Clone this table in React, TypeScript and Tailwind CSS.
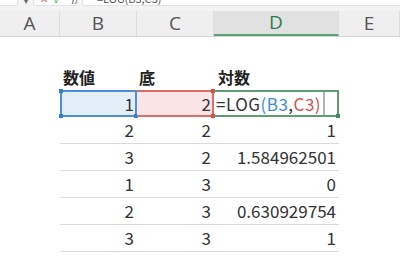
const FONT = { fontFamily: '"Noto Sans CJK JP", "Noto Sans", sans-serif' };

const COLS = [
  { key: 'A', w: 'w-[60px]' },
  { key: 'B', w: 'w-[77px]' },
  { key: 'C', w: 'w-[77px]' },
  { key: 'D', w: 'w-[125px]' },
  { key: 'E', w: 'flex-1' },
];

const ROWS = [
  { b: '2', c: '2', d: '1' },
  { b: '3', c: '2', d: '1.584962501' },
  { b: '1', c: '3', d: '0' },
  { b: '2', c: '3', d: '0.630929754' },
  { b: '3', c: '3', d: '1' },
];

function Corner({ cls }: { cls: string }) {
  return <span className={`absolute w-[4px] h-[4px] ${cls}`} />;
}

export default function App() {
  return (
    <div className="w-[400px] h-[267px] bg-white overflow-hidden text-[#333]" style={FONT}>
      {/* formula bar remnant */}
      <div className="h-[11px] bg-[#f3f3f3] flex items-start">
        <div className="w-[18px] h-[6px] bg-white rounded-br-[3px] border-b border-r border-[#e2e2e2]" />
        <div className="w-[15px] h-[6px] flex justify-center items-start overflow-hidden">
          <span className="text-[8px] leading-none text-[#666] -mt-[3px]">▾</span>
        </div>
        <div className="w-[45px] h-[6px] bg-white rounded-b-[3px] border-b border-x border-[#e2e2e2] flex items-start gap-[6px] pl-[6px] overflow-hidden">
          <span className="text-[10px] leading-none text-[#e06666] -mt-[6px]">✕</span>
          <span className="text-[10px] leading-none text-[#3a9a4a] -mt-[6px]">✓</span>
          <span className="text-[10px] leading-none text-[#555] italic -mt-[5px] ml-[4px]">fx</span>
        </div>
        <div className="ml-[4px] flex-1 h-[6px] bg-white rounded-bl-[3px] border-b border-l border-[#e2e2e2] overflow-hidden pl-[14px]">
          <span className="block text-[11px] leading-none text-[#555] -mt-[7px]">=LOG(B3,C3)</span>
        </div>
      </div>

      {/* column headers */}
      <div className="flex h-[26px] bg-[#efefef] border-b border-[#d4d4d4]">
        {COLS.map((c) => (
          <div
            key={c.key}
            className={`${c.w} h-full flex items-center justify-center text-[19px] leading-none border-r border-[#dcdcdc] ${
              c.key === 'D' ? 'bg-[#e1e1e1] text-[#2e7d4f] border-b-2 border-b-[#5aa377]' : 'text-[#555]'
            }`}
            style={{ fontFamily: '"Open Sans", "Liberation Sans", sans-serif' }}
          >
            {c.key}
          </div>
        ))}
      </div>

      {/* row 1 (empty) */}
      <div className="h-[26px]" />

      {/* row 2 headers */}
      <div className="flex h-[27px] items-center text-[16px] font-bold text-[#222]">
        <div className="w-[60px]" />
        <div className="w-[77px] pl-[3px]">数値</div>
        <div className="w-[77px] pl-[2px]">底</div>
        <div className="w-[125px] pl-[4px]">対数</div>
      </div>

      {/* row 3 - editing */}
      <div className="flex h-[27px] text-[17px]">
        <div className="w-[60px]" />
        <div className="relative w-[77px] h-full bg-[#e3eef9] border-2 border-[#4a8fd8] flex items-center justify-end pr-[1px]">
          1
          <Corner cls="bg-[#2f7fd5] -left-[3px] -top-[3px]" />
          <Corner cls="bg-[#2f7fd5] -left-[3px] -bottom-[3px]" />
          <Corner cls="bg-[#2f7fd5] -right-[3px] -bottom-[3px]" />
        </div>
        <div className="relative w-[77px] h-full bg-[#f9e5e6] border-y-2 border-r-2 border-[#df6b6b] flex items-center justify-end pr-[1px]">
          2
          <Corner cls="bg-[#d94c4c] -right-[3px] -top-[3px]" />
          <Corner cls="bg-[#d94c4c] -right-[3px] -bottom-[3px]" />
        </div>
        <div className="relative w-[125px] h-full border-2 border-l-0 border-[#5c9e72] flex items-center pl-[2px] tracking-[0.5px]">
          <span className="text-[#333]">=LOG</span>
          <span className="text-[#3b8bd6]">(B3</span>
          <span className="text-[#333]">,</span>
          <span className="text-[#d84f4f]">C3)</span>
          <span className="ml-[2px] w-[2px] h-full bg-[#b5b5b5]" />
          <Corner cls="bg-[#3f8a5a] -right-[3px] -bottom-[3px]" />
        </div>
      </div>

      {/* data rows */}
      {ROWS.map((r, i) => (
        <div key={i} className="flex h-[27px] text-[17px]">
          <div className="w-[60px]" />
          <div className="flex border-b border-[#dadada]">
            <div className="w-[77px] flex items-center justify-end pr-[3px]">{r.b}</div>
            <div className="w-[77px] flex items-center justify-end pr-[3px]">{r.c}</div>
            <div className="w-[125px] flex items-center justify-end pr-[3px]">{r.d}</div>
          </div>
        </div>
      ))}
    </div>
  );
}
